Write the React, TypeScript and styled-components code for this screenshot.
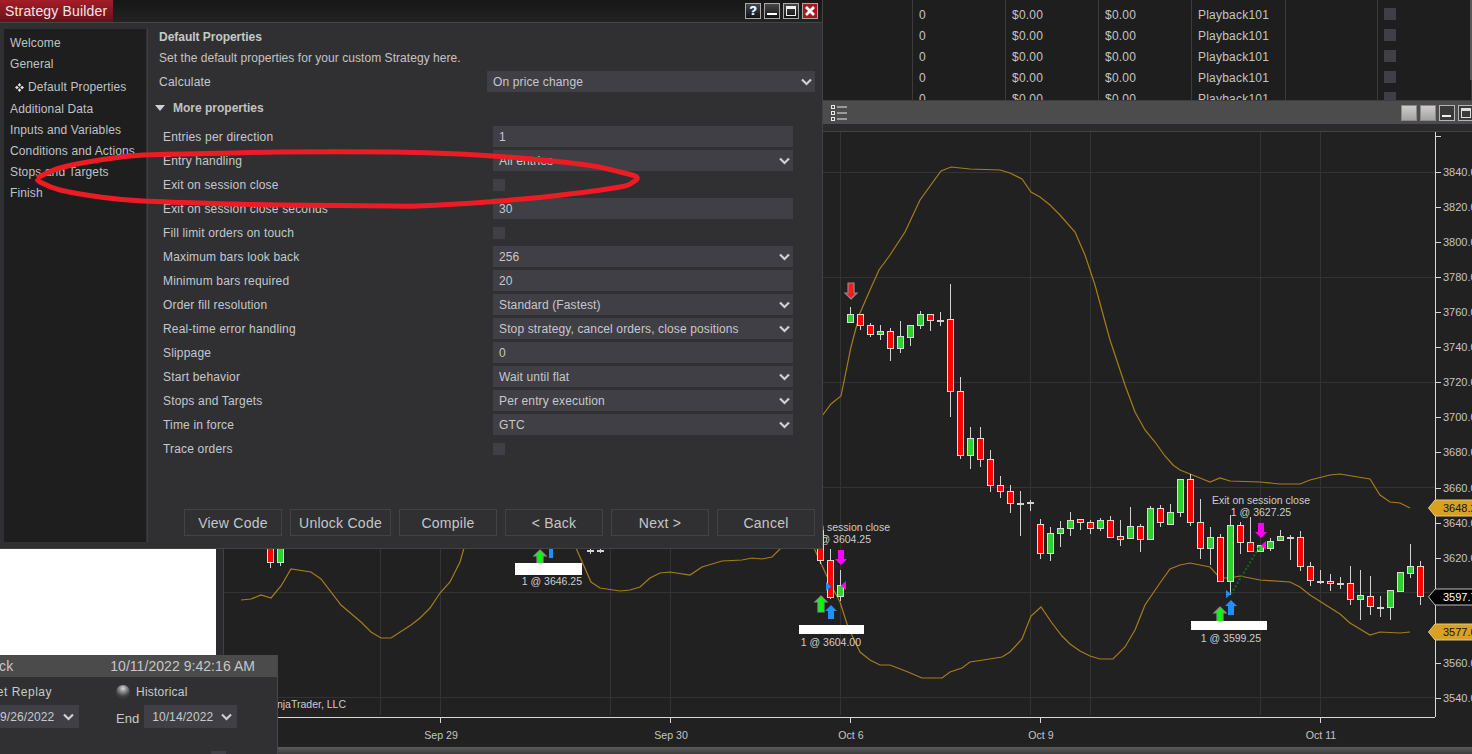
import React from 'react';
import styled, { createGlobalStyle } from 'styled-components';

const Global = createGlobalStyle`
  html, body { margin: 0; padding: 0; width: 1472px; height: 754px; overflow: hidden; background: #1e1e1e; }
  body { font-family: "Liberation Sans", Arial, sans-serif; font-size: 12px; letter-spacing: .22px; color: #c9c9c9; }
  * { box-sizing: border-box; }
`;

const Desktop = styled.div`position: relative; width: 1472px; height: 754px; overflow: hidden;`;

/* --------- windows on the desktop --------- */
const GridWindow = styled.section`
  position: absolute; left: 822px; top: 0; width: 650px; height: 100px;
  background: #1e1e1e; overflow: hidden;
`;
const GridRow = styled.div<{ $h: number }>`display: flex; height: ${p => p.$h}px;`;
const GridCell = styled.div<{ $w: number }>`
  width: ${p => p.$w}px; flex: none; padding-left: 6px; display: flex; align-items: center;
  border-right: 1px solid #3b3b3b; line-height: 21px; color: #c4c4c4;
`;
const GridCheck = styled.span`width: 12px; height: 12px; background: #3f3f45; display: block; margin-bottom: 4px;`;
const GridScroll = styled.div`position: absolute; right: 0; top: 0; width: 2px; height: 80px; background: #5a5a5a;`;

const ChartWindow = styled.section`
  position: absolute; left: 216px; top: 100px; width: 1256px; height: 654px;
  display: flex; flex-direction: column; background: #212121;
`;
const ChartToolbar = styled.div`
  height: 24px; flex: none; background: #4c4c4c; border-top: 1px solid #3c3c3c;
  padding: 4px 0 0 615px; display: flex; align-items: flex-start;
`;
const ToolbarSpacer = styled.div`flex: 1;`;
const ChartButtons = styled.div`display: flex; gap: 3px; margin-right: -2px;`;
const GreyButton = styled.span`
  width: 16px; height: 16px; display: block;
  background: linear-gradient(#cfcbcb, #a5a2a2); border: 1px solid #8a8a8a;
`;
const OutlineButton = styled.span`
  width: 16px; height: 16px; display: flex; border: 1px solid #b5b5b5; background: #3a3a3a;
  align-items: center; justify-content: center;
`;
const ChartStrip = styled.div`height: 8px; flex: none; background: #2b2b2d; border-bottom: 1px solid #414141;`;
const ChartBody = styled.div`flex: 1; display: flex; min-height: 0;`;
const ChartGutter = styled.div`width: 8px; flex: none; background: #2b2b2d; border-right: 1px solid #414141;`;
const ChartSvg = styled.svg`flex: 1; display: block; width: 1248px; height: 615px;`;
const ChartScroll = styled.div`height: 7px; flex: none; background: linear-gradient(#5a5a5a, #3c3c3c);`;

const WhitePane = styled.div`position: absolute; left: 0; top: 548px; width: 216px; height: 107px; background: #fff;`;

const PlaybackWindow = styled.section`
  position: absolute; left: -50px; top: 655px; width: 328px; height: 99px;
  background: #303033; border-right: 1px solid #474747;
  display: flex; flex-direction: column;
`;
const PlaybackHead = styled.div`
  height: 22px; flex: none; background: #4b4b4b; display: flex; justify-content: space-between;
  align-items: center; font-size: 14px; letter-spacing: .05px; padding: 0 22px 0 6px; color: #c6c6c6;
`;
const PlaybackBody = styled.div`
  display: grid; grid-template-columns: 166px 1fr; align-content: start; padding-top: 6px; row-gap: 5px;
  position: relative; height: 77px;
`;
const RadioLine = styled.div`display: flex; align-items: center; gap: 6px; height: 17px;`;
const Radio = styled.span`
  width: 14px; height: 14px; border-radius: 50%;
  background: radial-gradient(circle at 50% 25%, #d8d8d8 0, #8c8c8c 28%, #3e3e42 62%, #333337 100%);
`;
const PlaybackLeft = styled.div`
  padding-left: 2px; height: 17px; line-height: 19px; white-space: nowrap; text-align: right; padding-right: 64px; letter-spacing: .5px;
`;
const EndRow = styled.div`display: flex; align-items: flex-end; gap: 5px;`;
const EndLabel = styled.span`margin-bottom: 2px; font-size: 13px; letter-spacing: 0;`;
const DateField = styled.div<{ $w: number; $pad: number }>`
  width: ${p => p.$w}px; height: 23px; background: #3f3f45; display: flex; align-items: center;
  justify-content: space-between; padding: 0 5px 0 ${p => p.$pad}px; font-size: 12px; letter-spacing: .1px;
`;
const PlaybackCorner = styled.span`position: absolute; left: 261px; bottom: 0; width: 15px; height: 3px; background: #3f3f45;`;

const Dialog = styled.section`
  position: absolute; left: 0; top: 0; width: 823px; height: 549px;
  background: #303033; border-right: 1px solid #434343; border-bottom: 1px solid #434343;
  display: flex; flex-direction: column;
`;
const TitleBar = styled.header`
  height: 23px; flex: none; display: flex; justify-content: space-between; align-items: flex-start;
  background: linear-gradient(#161616, #232323); border-bottom: 1px solid #454545;
`;
const TitleTab = styled.div`
  width: 113px; height: 22px; padding-left: 5px; display: flex; align-items: center;
  background: linear-gradient(#a51d27, #64131a); color: #f0e6e6; font-size: 14px; letter-spacing: .17px;
`;
const WinButtons = styled.div`display: flex; gap: 3px; padding: 3px 4px 0 0;`;
const WinButton = styled.span<{ $close?: boolean }>`
  width: 16px; height: 16px; border: 1px solid #a8a8a8; display: flex; align-items: center; justify-content: center;
  background: ${p => p.$close ? '#a8161f' : 'linear-gradient(#484848, #111)'};
`;
const HelpGlyph = styled.span`font: bold 12px "Liberation Sans", sans-serif; color: #fff; letter-spacing: 0; text-shadow: 1px 0 #4aa3ff;`;

const DialogBody = styled.div`flex: 1; display: flex; padding: 6px 0 6px 4px; min-height: 0;`;
const Nav = styled.nav`
  width: 142px; flex: none; background: #1e1e1e; padding: 4px 0 0 6px;
  display: flex; flex-direction: column;
`;
const NavItem = styled.div<{ $active?: boolean }>`
  height: 21px; line-height: 21px; white-space: nowrap; color: #bfc3c7; letter-spacing: .13px;
  ${p => p.$active ? 'padding-left: 5px; height: 24px; line-height: 24px; display: flex; align-items: center; gap: 4px;' : ''}
`;
const Content = styled.div`
  flex: 1; margin-left: 1px; border-left: 1px solid #3f3f3f; padding-left: 11px;
  display: flex; flex-direction: column; min-width: 0;
`;
const PageTitle = styled.h2`margin: 0; font: bold 12px/14px "Liberation Sans", sans-serif; letter-spacing: -.03px; color: #c8c8c8; padding-top: 1px;`;
const PageHint = styled.p`margin: 7px 0 0; line-height: 14px; color: #c4c4c4; letter-spacing: .05px;`;
const CalcRow = styled.div`display: flex; align-items: center; margin-top: 6px; height: 21px;`;
const CalcLabel = styled.div`width: 328px; flex: none;`;
const MoreHead = styled.div`display: flex; align-items: center; height: 14px; margin-top: 9px; font-weight: bold; letter-spacing: 0; color: #c2c2c2;`;
const Triangle = styled.span`
  width: 0; height: 0; margin: 0 8px 0 -4px;
  border-left: 5px solid transparent; border-right: 5px solid transparent; border-top: 6px solid #cfcfcf;
`;
const Props = styled.div`display: flex; flex-direction: column; gap: 3px; margin-top: 11px; padding-left: 4px;`;
const PropRow = styled.div`display: flex; align-items: center; height: 21px;`;
const PropLabel = styled.div`width: 330px; flex: none; white-space: nowrap; color: #c4c8cc; letter-spacing: .17px;`;
const Field = styled.div<{ $w: number }>`
  width: ${p => p.$w}px; height: 21px; flex: none; background: #3f3f45; color: #c8c8c8; letter-spacing: .13px;
  display: flex; align-items: center; justify-content: space-between; padding: 0 3px 0 6px;
`;
const CheckBox = styled.span`width: 12px; height: 12px; background: #3f3f45; display: block;`;
const Footer = styled.div`display: flex; gap: 8px; margin-top: auto; margin-bottom: 6px; padding-left: 25px;`;
const Btn = styled.button<{ $w: number }>`
  width: ${p => p.$w}px; height: 27px; background: transparent; border: 1px solid #434343; color: #c6c6c6;
  font: 14px "Liberation Sans", sans-serif; letter-spacing: .25px; padding: 0;
`;

const Annotation = styled.svg`position: absolute; left: 0; top: 0; width: 1472px; height: 754px; pointer-events: none;`;

/* --------- small drawings --------- */
const Chevron = () => (
  <svg width="11" height="8" viewBox="0 0 11 8"><path d="M1 1.5 L5.5 6 L10 1.5" fill="none" stroke="#cfcfcf" strokeWidth="2.2" /></svg>
);
const ListIcon = () => (
  <svg width="16" height="16" viewBox="0 0 16 16" fill="none" stroke="#e8e8e8" strokeWidth="1">
    <rect x=".5" y=".5" width="3" height="3" /><rect x=".5" y="6.5" width="3" height="3" /><rect x=".5" y="12.5" width="3" height="3" />
    <path d="M6 2h10M6 8h10M6 14h10" />
  </svg>
);
const DiamondMark = () => (
  <svg width="9" height="9" viewBox="0 0 9 9" fill="#e4e4e4">
    <path d="M4.5 0 L6.2 1.9 L4.5 3.8 L2.8 1.9Z M4.5 5.2 L6.2 7.1 L4.5 9 L2.8 7.1Z M1.9 2.8 L3.8 4.5 L1.9 6.2 L0 4.5Z M7.1 2.8 L9 4.5 L7.1 6.2 L5.2 4.5Z" />
  </svg>
);

/* --------- chart data (page coordinates) --------- */
type C = [number, number, number, number, number, 'r' | 'g' | 'd'];
const candles: C[] = [
  [270,530,568,548,562,'r'],[280,530,566,548,562,'g'],
  [590,548,554,550,550,'d'],[600,548,553,550,550,'d'],
  [820,530,564,530,560,'r'],[830,549,599,560,597,'r'],[840,570,601,585,596,'g'],
  [850,307,323,314,322,'g'],[860,314,330,314,325,'r'],[870,323,337,325,334,'r'],[880,325,340,331,334,'g'],
  [890,328,361,331,348,'r'],[900,321,353,336,348,'g'],[910,325,346,325,337,'g'],[920,311,329,314,325,'g'],
  [930,314,331,314,320,'r'],[940,312,326,320,320,'d'],[950,284,417,319,391,'r'],[960,377,459,391,455,'r'],
  [970,427,469,438,455,'g'],[980,427,467,438,459,'r'],[990,450,492,459,485,'r'],[1000,476,498,485,491,'r'],
  [1010,485,513,491,503,'r'],[1020,491,536,503,503,'d'],[1030,500,511,502,502,'d'],[1040,519,559,524,553,'r'],
  [1050,527,561,533,553,'g'],[1060,521,547,528,533,'g'],[1070,512,536,520,528,'g'],[1080,519,530,519,522,'r'],
  [1090,520,534,522,528,'r'],[1100,518,531,520,528,'g'],[1110,516,538,520,537,'r'],[1120,520,546,536,539,'r'],
  [1130,507,539,526,538,'g'],[1140,524,552,526,539,'r'],[1150,506,540,508,539,'g'],[1160,505,527,508,522,'r'],
  [1170,504,524,512,524,'g'],[1180,479,517,479,512,'g'],[1190,474,526,479,522,'r'],[1200,499,559,522,548,'r'],
  [1210,527,565,537,548,'g'],[1220,534,582,537,581,'r'],[1230,515,595,525,581,'g'],[1240,522,554,525,542,'r'],
  [1250,517,552,542,551,'r'],[1260,545,551,545,551,'g'],[1270,538,551,541,548,'g'],[1280,530,540,536,540,'g'],
  [1290,535,560,537,537,'d'],[1300,531,571,537,566,'r'],[1310,562,586,566,580,'r'],[1320,570,584,581,581,'d'],
  [1330,574,591,581,583,'r'],[1340,577,589,583,583,'d'],[1350,566,605,583,599,'r'],[1360,570,620,595,599,'g'],
  [1370,576,615,596,606,'r'],[1380,596,617,607,607,'d'],[1390,590,620,590,607,'g'],[1400,572,591,572,591,'g'],
  [1410,544,578,566,573,'g'],[1420,561,605,566,596,'r'],
];
const pts = (a: number[][]) => a.map(p => p.join(',')).join(' ');
const smooth = (a: number[][]) => {
  let d = `M${a[0][0]} ${a[0][1]}`;
  for (let i = 0; i < a.length - 1; i++) {
    const p0 = a[Math.max(i - 1, 0)], p1 = a[i], p2 = a[i + 1], p3 = a[Math.min(i + 2, a.length - 1)];
    d += ` C${p1[0] + (p2[0] - p0[0]) / 6} ${p1[1] + (p2[1] - p0[1]) / 6} ${p2[0] - (p3[0] - p1[0]) / 6} ${p2[1] - (p3[1] - p1[1]) / 6} ${p2[0]} ${p2[1]}`;
  }
  return d;
};
const upperBand = [[822,416],[831,404],[841,396],[851,347],[860,313],[870,290],[879,270],[890,255],[905,232],[920,200],[941,171],[951,167],[970,169],[1000,170],[1010,173],[1022,179],[1031,192],[1040,197],[1050,205],[1060,215],[1075,232],[1085,255],[1095,285],[1110,340],[1125,385],[1135,412],[1145,430],[1155,442],[1165,456],[1173,465],[1180,470],[1200,478],[1210,482],[1220,478],[1230,481],[1260,482],[1280,484],[1300,484],[1310,480],[1330,475],[1340,474],[1370,479],[1380,495],[1390,502],[1400,503],[1410,508]];
const lowerA = [[241,600],[251,599],[261,595],[271,598],[281,586],[291,569],[311,572],[321,579],[341,605],[361,622],[371,632],[381,638],[391,638],[411,625],[420,618],[430,608],[440,593],[450,582],[460,562],[464,548]];
const lowerB = [[576,548],[591,582],[600,588],[620,591],[630,590],[640,587],[650,578],[660,573],[670,572],[690,575],[702,567],[722,561],[742,560],[752,558],[762,559],[772,557],[782,547]];
const lowerC = [[814,548],[830,583],[840,602],[848,627],[860,652],[870,660],[880,665],[890,665],[908,672],[922,678],[942,678],[950,672],[962,668],[970,662],[983,660],[1002,657],[1010,652],[1022,639],[1031,616],[1041,607],[1052,623],[1062,636],[1070,644],[1080,651],[1090,656],[1100,659],[1113,659],[1125,647],[1135,630],[1145,605],[1160,583],[1170,569],[1180,565],[1190,563],[1210,567],[1220,578],[1230,578],[1240,576],[1260,580],[1290,582],[1300,587],[1310,595],[1340,614],[1350,623],[1370,635],[1380,632],[1400,633],[1410,632]];
const hGrid = [172, 277, 382, 487, 592, 697];
const vGrid = [380, 440, 610, 670, 840, 1030, 1090, 1260, 1320];
const yLabels = [[3840,172],[3820,207],[3800,242],[3780,277],[3760,312],[3740,347],[3720,382],[3700,417],[3680,452],[3660,488],[3640,523],[3620,558],[3560,663],[3540,698]];
const xLabels: [string, number][] = [['Sep 29',440],['Sep 30',670],['Oct 6',850],['Oct 9',1040],['Oct 11',1320]];

const UpArrow = ({ x, y, h, fill, edge }: { x: number; y: number; h: number; fill: string; edge?: boolean }) => (
  <polygon points={`${x},${y} ${x+6},${y+6} ${x+3},${y+6} ${x+3},${y+h} ${x-3},${y+h} ${x-3},${y+6} ${x-6},${y+6}`} fill={fill} stroke={edge ? '#8c8c8c' : 'none'} strokeWidth="1.2" />
);
const DownArrow = ({ x, y, h, fill, edge }: { x: number; y: number; h: number; fill: string; edge?: boolean }) => (
  <polygon points={`${x},${y+h} ${x+6},${y+h-6} ${x+3},${y+h-6} ${x+3},${y} ${x-3},${y} ${x-3},${y+h-6} ${x-6},${y+h-6}`} fill={fill} stroke={edge ? '#8c8c8c' : 'none'} strokeWidth="1.2" />
);
const Flag = ({ y, fill, color, edge, label }: { y: number; fill: string; color: string; edge: string; label: string }) => (
  <g>
    <polygon points={`1428.5,${y} 1435,${y-8} 1480,${y-8} 1480,${y+8} 1435,${y+8}`} fill={fill} stroke={edge} />
    <text x="1443" y={y + 4} fill={color} fontSize="11">{label}</text>
  </g>
);

const Chart = () => (
  <ChartSvg viewBox="224 132 1248 615" fontFamily='"Liberation Sans", sans-serif' letterSpacing="0">
    <rect x="224" y="132" width="1248" height="615" fill="#212121" />
    <g stroke="#333" strokeWidth="1">
      {hGrid.map(y => <line key={y} x1="224" x2="1435" y1={y + .5} y2={y + .5} />)}
      {vGrid.map(x => <line key={x} x1={x + .5} x2={x + .5} y1="132" y2="715" />)}
    </g>
    <g fill="none" stroke="#a57d1d" strokeWidth="1.2">
      <polyline points={pts(upperBand)} />
      <polyline points={pts(lowerA)} />
      <polyline points={pts(lowerB)} />
      <polyline points={pts(lowerC)} />
    </g>
    {candles.map(([x, hi, lo, top, bot, k]) => (
      <g key={x}>
        <line x1={x + .5} x2={x + .5} y1={hi} y2={lo} stroke="#d2d2d2" />
        {k === 'd'
          ? <rect x={x - 3} y={top} width="7" height="2" fill="#d2d2d2" />
          : <rect x={x - 2.5} y={top + .5} width="6" height={bot - top} fill={k === 'r' ? '#ff0000' : '#32cd32'} stroke="#d9d9d9" />}
      </g>
    ))}
    <line x1="1231" y1="594" x2="1260" y2="546" stroke="#0f6a1a" strokeWidth="2" strokeDasharray="2 2" />
    <DownArrow x={851} y={283} h={16} fill="#ff1a1a" edge />
    <UpArrow x={821} y={596} h={16} fill="#00ff00" edge />
    <UpArrow x={831} y={605} h={14} fill="#1e90ff" />
    <DownArrow x={841} y={550} h={15} fill="#ff00ff" />
    <polygon points="826,582 831,586.5 826,591" fill="#1e90ff" />
    <polygon points="846,581 841,585.5 846,590" fill="#ff00ff" />
    <UpArrow x={1220} y={607} h={15} fill="#00ff00" edge />
    <UpArrow x={1231} y={600} h={15} fill="#1e90ff" />
    <DownArrow x={1261} y={523} h={15} fill="#ff00ff" />
    <polygon points="1226,590 1231,594 1226,598" fill="#1e90ff" />
    <polygon points="1266,541 1261,545.5 1266,550" fill="#ff00ff" />
    <UpArrow x={540} y={550} h={13} fill="#00ff00" edge />
    <rect x="549" y="549" width="4" height="9" fill="#1e90ff" />
    <rect x="515" y="563" width="67" height="12" fill="#fff" />
    <rect x="799" y="625" width="65" height="9" fill="#fff" />
    <rect x="1191" y="621" width="76" height="9" fill="#fff" />
    <g fill="#cdcdcd" fontSize="10.5">
      <text x="582" y="585" textAnchor="end">1 @ 3646.25</text>
      <text x="861" y="646" textAnchor="end">1 @ 3604.00</text>
      <text x="1261" y="642" textAnchor="end">1 @ 3599.25</text>
      <text x="890" y="531" textAnchor="end">Exit on session close</text>
      <text x="871" y="543" textAnchor="end">1 @ 3604.25</text>
      <text x="1261" y="504" textAnchor="middle">Exit on session close</text>
      <text x="1261" y="516" textAnchor="middle">1 @ 3627.25</text>
      <text x="346" y="708" textAnchor="end">© 2022 NinjaTrader, LLC</text>
    </g>
    <g stroke="#d8d8d8" strokeWidth="1">
      <line x1="224" x2="1435" y1="717.5" y2="717.5" />
      <line x1="1435.5" x2="1435.5" y1="132" y2="717" />
      <line x1="1435" x2="1441" y1="136.5" y2="136.5" />
      {yLabels.map(([p, y]) => <line key={p} x1="1435" x2="1441" y1={y + .5} y2={y + .5} />)}
      {xLabels.map(([t, x]) => <line key={t} x1={x + .5} x2={x + .5} y1="717" y2="723" />)}
    </g>
    <g fill="#c4c4c4" fontSize="11">
      {yLabels.map(([p, y]) => <text key={p} x="1443" y={y + 3.5}>{p}.00</text>)}
      {xLabels.map(([t, x]) => <text key={t} x={x + 1} y="739" textAnchor="middle" fontSize="10.6">{t}</text>)}
    </g>
    <Flag y={508} fill="#d8a123" color="#111" edge="#e6c77a" label="3648.25" />
    <Flag y={597} fill="#000" color="#fff" edge="#bdbdbd" label="3597.75" />
    <Flag y={632} fill="#d8a123" color="#111" edge="#e6c77a" label="3577.00" />
  </ChartSvg>
);

const colWidths = [91, 93, 93, 93, 94, 92, 94];
const TableRow = ({ h, filled }: { h: number; filled: boolean }) => (
  <GridRow $h={h}>
    <GridCell $w={colWidths[0]} />
    <GridCell $w={colWidths[1]}>{filled && '0'}</GridCell>
    <GridCell $w={colWidths[2]}>{filled && '$0.00'}</GridCell>
    <GridCell $w={colWidths[3]}>{filled && '$0.00'}</GridCell>
    <GridCell $w={colWidths[4]}>{filled && 'Playback101'}</GridCell>
    <GridCell $w={colWidths[5]} />
    <GridCell $w={colWidths[6]}>{filled && <GridCheck />}</GridCell>
  </GridRow>
);

type Prop = { label: string; value?: string; select?: boolean; check?: boolean };
const props: Prop[] = [
  { label: 'Entries per direction', value: '1' },
  { label: 'Entry handling', value: 'All entries', select: true },
  { label: 'Exit on session close', check: true },
  { label: 'Exit on session close seconds', value: '30' },
  { label: 'Fill limit orders on touch', check: true },
  { label: 'Maximum bars look back', value: '256', select: true },
  { label: 'Minimum bars required', value: '20' },
  { label: 'Order fill resolution', value: 'Standard (Fastest)', select: true },
  { label: 'Real-time error handling', value: 'Stop strategy, cancel orders, close positions', select: true },
  { label: 'Slippage', value: '0' },
  { label: 'Start behavior', value: 'Wait until flat', select: true },
  { label: 'Stops and Targets', value: 'Per entry execution', select: true },
  { label: 'Time in force', value: 'GTC', select: true },
  { label: 'Trace orders', check: true },
];
const navItems = ['Welcome', 'General', '*Default Properties', 'Additional Data', 'Inputs and Variables', 'Conditions and Actions', 'Stops and Targets', 'Finish'];
const buttons: [string, number][] = [['View Code', 98], ['Unlock Code', 101], ['Compile', 98], ['< Back', 98], ['Next >', 98], ['Cancel', 98]];

const ring = [[37,178],[60,168],[100,160],[143,155],[233,153],[280,152],[393,152],[460,154],[520,158],[587,165],[620,172],[635,176],[637,179],[633,182],[620,187],[553,196],[487,202],[417,206],[393,206],[280,205],[233,204],[143,201],[100,197],[60,190],[40,182],[37,178]];

export default function App() {
  return (
    <Desktop>
      <Global />
      <GridWindow>
        <TableRow h={5} filled={false} />
        {[0, 1, 2, 3, 4].map(i => <TableRow key={i} h={21} filled />)}
        <GridScroll />
      </GridWindow>

      <ChartWindow>
        <ChartToolbar>
          <ListIcon />
          <ToolbarSpacer />
          <ChartButtons>
            <GreyButton />
            <GreyButton />
            <OutlineButton><svg width="12" height="12" viewBox="0 0 12 12"><rect x="1" y="8" width="9" height="2" fill="#eee" /></svg></OutlineButton>
            <OutlineButton><svg width="12" height="12" viewBox="0 0 12 12" fill="none" stroke="#ddd"><rect x="1.5" y="1.5" width="9" height="9" /><path d="M1.5 3h9" strokeWidth="2" /></svg></OutlineButton>
          </ChartButtons>
        </ChartToolbar>
        <ChartStrip />
        <ChartBody>
          <ChartGutter />
          <Chart />
        </ChartBody>
        <ChartScroll />
      </ChartWindow>

      <WhitePane />

      <PlaybackWindow>
        <PlaybackHead><span>Playback</span><span>10/11/2022 9:42:16 AM</span></PlaybackHead>
        <PlaybackBody>
          <PlaybackLeft>Market Replay</PlaybackLeft>
          <RadioLine><Radio />Historical</RadioLine>
          <EndRow>
            <DateField $w={129} $pad={50}>9/26/2022<Chevron /></DateField>
          </EndRow>
          <EndRow>
            <EndLabel>End</EndLabel>
            <DateField $w={93} $pad={8}>10/14/2022<Chevron /></DateField>
          </EndRow>
          <PlaybackCorner />
        </PlaybackBody>
      </PlaybackWindow>

      <Dialog>
        <TitleBar>
          <TitleTab>Strategy Builder</TitleTab>
          <WinButtons>
            <WinButton><HelpGlyph>?</HelpGlyph></WinButton>
            <WinButton><svg width="12" height="12" viewBox="0 0 12 12"><rect x="1" y="8" width="10" height="2" fill="#fff" /></svg></WinButton>
            <WinButton><svg width="12" height="12" viewBox="0 0 12 12" fill="none" stroke="#eee"><rect x="1.5" y="1.5" width="9" height="9" /><path d="M1.5 3h9" strokeWidth="2" /></svg></WinButton>
            <WinButton $close><svg width="12" height="12" viewBox="0 0 12 12"><path d="M2 2 L10 10 M10 2 L2 10" stroke="#fff" strokeWidth="2.8" /></svg></WinButton>
          </WinButtons>
        </TitleBar>
        <DialogBody>
          <Nav>
            {navItems.map(n => n.startsWith('*')
              ? <NavItem key={n} $active><DiamondMark />{n.slice(1)}</NavItem>
              : <NavItem key={n}>{n}</NavItem>)}
          </Nav>
          <Content>
            <PageTitle>Default Properties</PageTitle>
            <PageHint>Set the default properties for your custom Strategy here.</PageHint>
            <CalcRow>
              <CalcLabel>Calculate</CalcLabel>
              <Field $w={328}>On price change<Chevron /></Field>
            </CalcRow>
            <MoreHead><Triangle />More properties</MoreHead>
            <Props>
              {props.map(p => (
                <PropRow key={p.label}>
                  <PropLabel>{p.label}</PropLabel>
                  {p.check ? <CheckBox /> : <Field $w={300}>{p.value}{p.select && <Chevron />}</Field>}
                </PropRow>
              ))}
            </Props>
            <Footer>
              {buttons.map(([t, w]) => <Btn key={t} $w={w}>{t}</Btn>)}
            </Footer>
          </Content>
        </DialogBody>
      </Dialog>

      <Annotation viewBox="0 0 1472 754">
        <path d={smooth(ring)} fill="none" stroke="#ed1c24" strokeWidth="5" />
      </Annotation>
    </Desktop>
  );
}
